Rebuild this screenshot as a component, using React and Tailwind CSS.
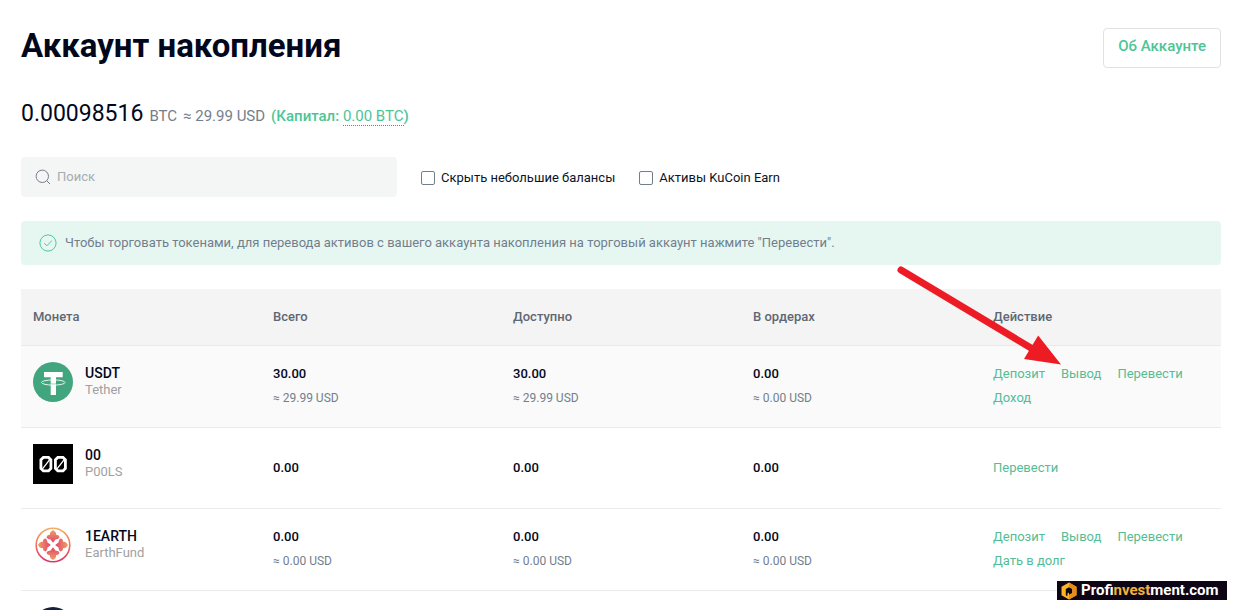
import React from 'react'

const columns = ['Монета', 'Всего', 'Доступно', 'В ордерах', 'Действие']

const coins = [
  {
    symbol: 'USDT',
    name: 'Tether',
    icon: TetherIcon,
    amounts: ['30.00', '30.00', '0.00'],
    usd: ['29.99', '29.99', '0.00'],
    actions: ['Депозит', 'Вывод', 'Перевести', 'Доход'],
    active: true,
  },
  {
    symbol: '00',
    name: 'P00LS',
    icon: PoolsIcon,
    amounts: ['0.00', '0.00', '0.00'],
    actions: ['Перевести'],
  },
  {
    symbol: '1EARTH',
    name: 'EarthFund',
    icon: EarthFundIcon,
    amounts: ['0.00', '0.00', '0.00'],
    usd: ['0.00', '0.00', '0.00'],
    actions: ['Депозит', 'Вывод', 'Перевести', 'Дать в долг'],
  },
]

function TetherIcon() {
  return (
    <svg viewBox="0 0 40 40" className="size-10 shrink-0" aria-hidden="true">
      <circle cx="20" cy="20" r="20" fill="#41a57d" />
      <ellipse cx="20.3" cy="20.5" rx="11.8" ry="2.6" fill="none" stroke="#e6f5ee" strokeWidth="1" />
      <path d="M11 10h18.700v5.300H23V33h-5.300V15.300H11z" fill="#fff" />
      <path d="M17.700 21.800c1.700.3 3.600.3 5.300 0" fill="none" stroke="#41a57d" strokeWidth=".8" opacity=".6" />
    </svg>
  )
}

function PoolsIcon() {
  return (
    <svg viewBox="0 0 40 40" className="size-10 shrink-0" aria-hidden="true">
      <path d="M0 0h40v40H0z" fill="#000" />
      <g fill="none" stroke="#fff" strokeWidth="2.800">
        <path d="M10.300 13.400h5.200l2.400 2.400v8.700l-2.400 2.400h-5.200l-2.400-2.400v-8.700z" />
        <path d="M24.800 13.400H30l2.400 2.400v8.700L30 26.900h-5.200l-2.400-2.400v-8.700z" />
      </g>
      <path d="m9.500 24.800 7-9M24 24.800l7-9" stroke="#fff" strokeWidth="1.300" />
    </svg>
  )
}

function EarthFundIcon() {
  const petal =
    'M20 17.800 17.300 14.300c-1 .2-2.200-.2-3.600-1.300-.4-1.800.7-3 3.200-3.200-.3-2 .5-3.200 3.100-4.800 2.600 1.600 3.400 2.800 3.100 4.800 2.500.2 3.600 1.400 3.200 3.200-1.400 1.100-2.600 1.500-3.600 1.300z'
  return (
    <svg viewBox="0 0 40 40" className="size-10 shrink-0" aria-hidden="true">
      <defs>
        <linearGradient id="earth" gradientUnits="userSpaceOnUse" x1="20" y1="2" x2="20" y2="38">
          <stop offset="0" stopColor="#f2b268" />
          <stop offset=".5" stopColor="#ec7560" />
          <stop offset="1" stopColor="#dc2f68" />
        </linearGradient>
        <linearGradient id="petal" gradientUnits="userSpaceOnUse" x1="20" y1="5" x2="20" y2="18">
          <stop offset="0" stopColor="#efa066" />
          <stop offset="1" stopColor="#e1426a" />
        </linearGradient>
      </defs>
      <circle cx="20" cy="20" r="16.8" fill="none" stroke="url(#earth)" strokeWidth="1.6" />
      <g fill="url(#petal)">
        <path d={petal} />
        <path d={petal} transform="rotate(90 20 20)" />
        <path d={petal} transform="rotate(180 20 20)" />
        <path d={petal} transform="rotate(270 20 20)" />
      </g>
    </svg>
  )
}

function InchIcon() {
  return (
    <svg viewBox="0 0 40 40" className="size-10 shrink-0" aria-hidden="true">
      <circle cx="20" cy="20" r="20" fill="#14213f" />
    </svg>
  )
}

function Filter({ children }) {
  return (
    <label className="flex items-center gap-1.5 text-[13px] text-[#0b1426]">
      <input
        type="checkbox"
        className="size-3.5 appearance-none rounded-xs border border-[#737e8d] bg-white checked:bg-[#24ae8f]"
      />
      {children}
    </label>
  )
}

function CoinRow({ coin }) {
  const Icon = coin.icon
  return (
    <tr className={`border-b border-[#ebebeb] ${coin.usd ? 'h-[82px]' : 'h-[81px]'} ${coin.active ? 'bg-[#fafafa]' : ''}`}>
      <td className="px-3 pt-4 align-top">
        <div className="flex gap-3">
          <Icon />
          <div className="pt-0.5">
            <div className="text-sm leading-[18px] font-medium text-[#01081e]">{coin.symbol}</div>
            <div className="text-[13px] leading-4 text-[#a1a1a1]">{coin.name}</div>
          </div>
        </div>
      </td>
      {coin.amounts.map((amount, i) => (
        <td key={i} className="px-3">
          <div className="text-[13px] leading-6 font-medium text-[#01081e]">{amount}</div>
          {coin.usd && <div className="text-xs leading-6 text-[#737e8d]">≈ {coin.usd[i]} USD</div>}
        </td>
      ))}
      <td className="px-3">
        <div className="flex flex-wrap gap-x-4 text-[13px] leading-6">
          {coin.actions.map((action) => (
            <a key={action} href="#" className="text-[#55bd95] hover:underline">
              {action}
            </a>
          ))}
        </div>
      </td>
    </tr>
  )
}

export default function App() {
  return (
    <main className="relative h-screen overflow-hidden bg-white pt-7 pr-4 pl-[21px] font-['Roboto','Liberation_Sans',sans-serif]">
      {/* Header */}
      <header className="flex items-start justify-between">
        <h1 className="text-[33px] leading-9 font-bold text-[#01081e]">Аккаунт накопления</h1>
        <button className="h-10 rounded border border-[#e1e1e1] px-3.5 pb-1 text-[15px] font-medium text-[#4bc596]">
          Об Аккаунте
        </button>
      </header>

      {/* Balance */}
      <div className="mt-[30px] flex items-baseline gap-1.5 text-[15px] leading-8 text-[#737e8d]">
        <span className="text-[23px] text-[#01081e]">0.00098516</span>
        <span>BTC</span>
        <span>≈ 29.99 USD</span>
        <span className="font-medium text-[#4bc596]">
          (Капитал: <span className="border-b border-dotted border-[#737e8d] font-normal">0.00 BTC</span>)
        </span>
      </div>

      {/* Filters */}
      <div className="mt-[25px] flex items-center gap-6">
        <label className="flex h-10 w-[376px] items-center gap-1.5 rounded bg-[#f4f6f5] px-3.5">
          <svg viewBox="0 0 16 16" className="size-4 shrink-0" fill="none" stroke="#737e8d" aria-hidden="true">
            <circle cx="7.3" cy="7.3" r="6.2" />
            <path d="m12.2 12.2 2.6 2.6" strokeLinecap="round" />
          </svg>
          <input
            type="text"
            aria-label="Поиск"
            placeholder="Поиск"
            className="min-w-0 flex-1 bg-transparent text-[13px] outline-none placeholder:text-[#a6acb3]"
          />
        </label>
        <div className="flex gap-6 pt-0.5">
          <Filter>Скрыть небольшие балансы</Filter>
          <Filter>Активы KuCoin Earn</Filter>
        </div>
      </div>

      {/* Notice */}
      <div className="mt-6 flex h-11 items-center gap-2 rounded bg-[#e6f7f1] px-[18px] text-[13px] text-[#737e8d]">
        <svg viewBox="0 0 18 18" className="size-[18px] shrink-0" fill="none" stroke="#4bc9a0" aria-hidden="true">
          <circle cx="9" cy="9" r="8.1" />
          <path d="m5.2 9.2 2.7 2.6 4.9-5.2" />
        </svg>
        <p>Чтобы торговать токенами, для перевода активов с вашего аккаунта накопления на торговый аккаунт нажмите "Перевести".</p>
      </div>

      {/* Assets */}
      <table className="mt-6 w-full table-fixed border-collapse text-left">
        <thead>
          <tr className="h-14 border-b border-[#ebebeb] bg-[#f4f4f4]">
            {columns.map((column) => (
              <th key={column} scope="col" className="px-3 text-[13px] font-medium text-[#5f6773]">
                {column}
              </th>
            ))}
          </tr>
        </thead>
        <tbody>
          {coins.map((coin) => (
            <CoinRow key={coin.symbol} coin={coin} />
          ))}
          <tr>
            <td colSpan={5} className="px-3 pt-4">
              <InchIcon />
            </td>
          </tr>
        </tbody>
      </table>

      {/* Arrow pointing at the withdraw link */}
      <svg
        viewBox="0 0 168 104"
        className="pointer-events-none absolute top-[264px] right-[173px] h-[104px] w-[168px]"
        aria-hidden="true"
      >
        <path d="m5 6 130 78" stroke="#ed1c24" strokeWidth="7" strokeLinecap="round" />
        <path d="m142.200 71.500 22.800 29-37-5.500z" fill="#ed1c24" />
      </svg>

      {/* Watermark */}
      <div className="absolute right-2.5 bottom-2.5 flex h-[19px] w-[170px] items-center gap-1 bg-[#0d0416] pl-1 text-[15px] leading-none font-bold text-white">
        <svg viewBox="0 0 16 18" className="h-[18px] w-4 shrink-0" aria-hidden="true">
          <path d="M8 .5 15.500 4.700v8.600L8 17.500.5 13.300V4.700z" fill="#f9b428" />
          <path d="M8 .5 15.500 4.700v8.600L8 17.500v-3.700l4-2.800V7L8 4.500z" fill="#e98a1d" />
          <path d="m8 5.200 3.200 1.900v3.800L8 12.800v-2.300l-1.600.9v2.800l-1.600-.9V7.100z" fill="#0d0416" />
        </svg>
        <span>
          Prof<span className="text-[#f0b23c]">invest</span>ment.com
        </span>
      </div>
    </main>
  )
}
